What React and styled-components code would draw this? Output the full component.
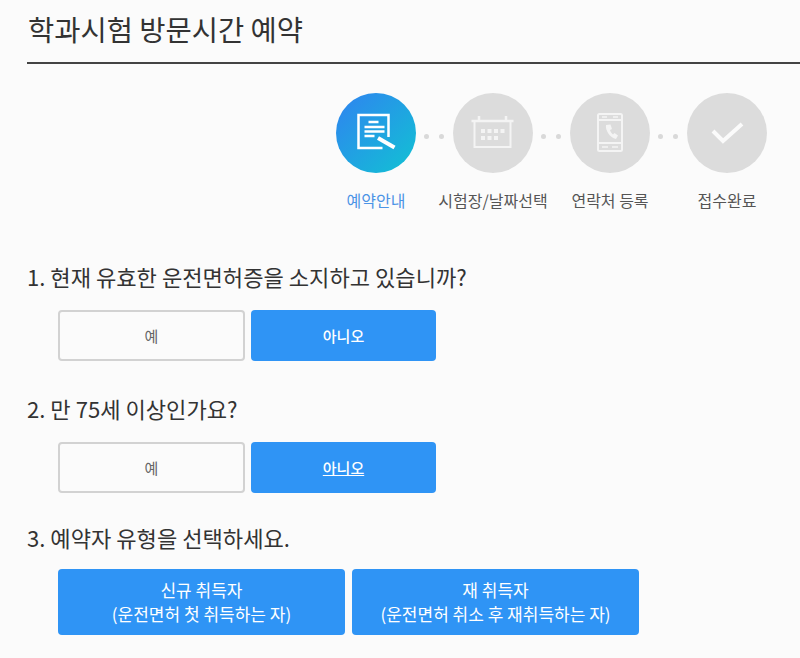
import React from "react";
import styled, { createGlobalStyle } from "styled-components";

const Global = createGlobalStyle`
  html, body { margin: 0; padding: 0; background: #fbfbfb; }
  body { font-family: "Noto Sans CJK KR", "Noto Sans", sans-serif; width: 800px; height: 658px; overflow: hidden; }
`;
const Page = styled.div`
  padding: 0 0 0 27px;
  width: 800px;
  box-sizing: border-box;
  display: flex;
  flex-direction: column;
`;
const Title = styled.h1`
  margin: 0;
  height: 64px;
  box-sizing: border-box;
  padding: 7px 0 0 1px;
  border-bottom: 2px solid #444;
  font-size: 28.5px;
  font-weight: 400;
  line-height: 43px;
  color: #333;
`;
const Steps = styled.div`
  display: flex;
  align-self: flex-end;
  margin-top: 29px;
  margin-right: 32px;
  width: 432px;
`;
const Step = styled.div`
  width: 80px;
  margin-left: ${p => p.$ml || 0}px;
  display: flex;
  flex-direction: column;
  align-items: center;
  position: relative;
`;
const Circle = styled.div`
  width: 80px;
  height: 80px;
  border-radius: 50%;
  background: ${p => p.$active ? "linear-gradient(135deg, #2b8cec 15%, #14bcd6 90%)" : "#dcdcdc"};
  display: flex;
  align-items: center;
  justify-content: center;
`;
const Dots = styled.div`
  position: absolute;
  left: ${p => p.$left}px;
  top: 41px;
  display: flex;
  gap: 10px;
  i { width: 5px; height: 5px; border-radius: 50%; background: #d9d9d9; display: block; }
`;
const StepLabel = styled.div`
  margin-top: 16px;
  font-size: 16px;
  line-height: 22px;
  white-space: nowrap;
  color: ${p => p.$active ? "#4b94e6" : "#555"};
`;
const Question = styled.h2`
  margin: ${p => p.$mt}px 0 0 0;
  font-size: 22.1px;
  font-weight: 400;
  line-height: 30px;
  color: #333;
`;
const Row = styled.div`
  display: flex;
  gap: ${p => p.$gap}px;
  margin: ${p => p.$mt}px 0 0 31px;
`;
const Choice = styled.button`
  width: ${p => p.$w}px;
  height: ${p => p.$h}px;
  box-sizing: border-box;
  border-radius: 4px;
  border: ${p => p.$on ? "none" : "2px solid #d2d2d2"};
  background: ${p => p.$on ? "#2f94f5" : "#fbfbfb"};
  color: ${p => p.$on ? "#fff" : "#666"};
  font-family: inherit;
  font-size: 15px;
  line-height: 23px;
  font-weight: ${p => p.$on ? 500 : 400};
  padding: 0;
  text-decoration: ${p => p.$u ? "underline" : "none"};
`;
const Big = styled(Choice)`
  font-size: 17px;
  line-height: 24px;
  font-weight: 400;
`;

const DocIcon = () => (
  <svg width="44" height="44" viewBox="0 0 44 44" fill="none" stroke="#fff" strokeWidth="2.500">
    <path d="M34.500 26V4H4.500v33h24" />
    <path d="M14.500 11h10M10.500 16h20M10.500 20.500h20M10.500 25h10" />
    <path d="M24 27l16.500 9.500" strokeWidth="4" />
  </svg>
);
const CalIcon = () => (
  <svg width="44" height="44" viewBox="0 0 44 44" fill="none" stroke="#f4f4f4" strokeWidth="2">
    <path d="M3.500 10v26h36V10" />
    <path d="M0.500 10h42M8 5v5M35 5v5" strokeWidth="2.500" />
    <path d="M10 20h4M16.500 20h4M23 20h4M29.500 20h4M10 27h4M16.500 27h4M23 27h4" strokeWidth="4" />
  </svg>
);
const PhoneIcon = () => (
  <svg width="44" height="46" viewBox="0 0 44 46" fill="none" stroke="#f4f4f4" strokeWidth="2">
    <rect x="10" y="4" width="24" height="37" rx="1.500" />
    <path d="M10 10h24M10 33h24" />
    <path d="M14 7h5M25 7h5M14 37h6M24 37h6" strokeWidth="1.500" />
    <path d="M18 15c-1 5 4 13 10 14l2-3.500-3.500-2.500-1.500 1.500c-1.500-1-2.500-3-3-4.500l2-1-1.500-4.500z" fill="#f4f4f4" stroke="none" />
  </svg>
);
const CheckIcon = () => (
  <svg width="36" height="30" viewBox="0 0 36 30" fill="none" stroke="#fbfbfb" strokeWidth="4">
    <path d="M4 13l10 10L33 6" />
  </svg>
);

const TwoDots = ({ left }) => <Dots $left={left}><i /><i /></Dots>;

export default function App() {
  return (
    <Page>
      <Global />
      <Title>학과시험 방문시간 예약</Title>
      <Steps>
        <Step>
          <Circle $active><DocIcon /></Circle>
          <TwoDots left={88} />
          <StepLabel $active>예약안내</StepLabel>
        </Step>
        <Step $ml={37}>
          <Circle><CalIcon /></Circle>
          <TwoDots left={88} />
          <StepLabel>시험장/날짜선택</StepLabel>
        </Step>
        <Step $ml={37}>
          <Circle><PhoneIcon /></Circle>
          <TwoDots left={88} />
          <StepLabel>연락처 등록</StepLabel>
        </Step>
        <Step $ml={37}>
          <Circle><CheckIcon /></Circle>
          <StepLabel>접수완료</StepLabel>
        </Step>
      </Steps>
      <Question $mt={50}>1. 현재 유효한 운전면허증을 소지하고 있습니까?</Question>
      <Row $gap={6} $mt={19}>
        <Choice $w={187} $h={51}>예</Choice>
        <Choice $w={185} $h={51} $on>아니오</Choice>
      </Row>
      <Question $mt={32}>2. 만 75세 이상인가요?</Question>
      <Row $gap={6} $mt={19}>
        <Choice $w={187} $h={51}>예</Choice>
        <Choice $w={185} $h={51} $on $u>아니오</Choice>
      </Row>
      <Question $mt={29}>3. 예약자 유형을 선택하세요.</Question>
      <Row $gap={7} $mt={17}>
        <Big $w={287} $h={66} $on>신규 취득자<br />(운전면허 첫 취득하는 자)</Big>
        <Big $w={287} $h={66} $on>재 취득자<br />(운전면허 취소 후 재취득하는 자)</Big>
      </Row>
    </Page>
  );
}
